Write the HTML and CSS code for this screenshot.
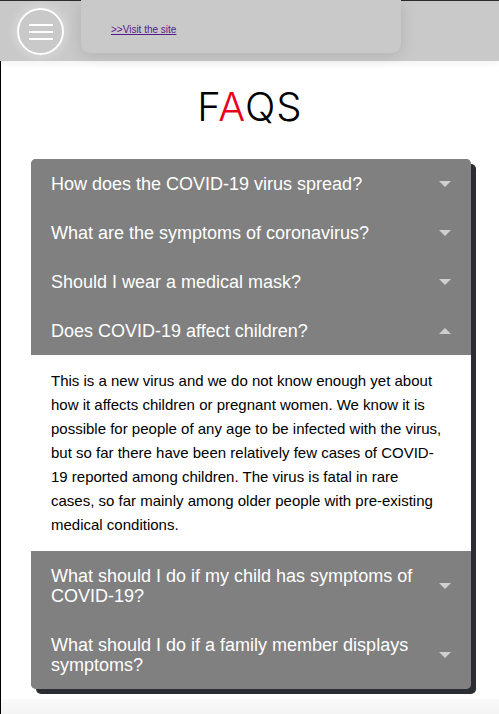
FILE: index.html
```html
<!DOCTYPE html>
<html lang="en">
<head>
<meta charset="utf-8">
<title>FAQS</title>
<link rel="stylesheet" href="styles.css">
</head>
<body>
<header class="topbar">
  <button class="menu-btn" aria-label="Menu">
    <span class="bar"></span><span class="bar"></span><span class="bar"></span>
  </button>
  <div class="card">
    <a class="visit" href="#">&gt;&gt;Visit the site</a>
  </div>
</header>
<main class="page">
  <h1 class="title">F<span class="red">A</span>QS</h1>
  <div class="accordion">
    <div class="item">
      <div class="q"><span class="q-text">How does the COVID-19 virus spread?</span><span class="arrow down"></span></div>
    </div>
    <div class="item">
      <div class="q"><span class="q-text">What are the symptoms of coronavirus?</span><span class="arrow down"></span></div>
    </div>
    <div class="item">
      <div class="q"><span class="q-text">Should I wear a medical mask?</span><span class="arrow down"></span></div>
    </div>
    <div class="item open">
      <div class="q"><span class="q-text">Does COVID-19 affect children?</span><span class="arrow up"></span></div>
      <div class="a">This is a new virus and we do not know enough yet about how it affects children or pregnant women. We know it is possible for people of any age to be infected with the virus, but so far there have been relatively few cases of COVID-19 reported among children. The virus is fatal in rare cases, so far mainly among older people with pre-existing medical conditions.</div>
    </div>
    <div class="item">
      <div class="q"><span class="q-text">What should I do if my child has symptoms of COVID-19?</span><span class="arrow down"></span></div>
    </div>
    <div class="item">
      <div class="q"><span class="q-text">What should I do if a family member displays symptoms?</span><span class="arrow down"></span></div>
    </div>
  </div>
  <div class="foot"></div>
</main>
</body>
</html>
```
FILE: styles.css
```css
* { box-sizing: border-box; }
html, body { margin: 0; padding: 0; }
body {
  font-family: "Liberation Sans", Arial, sans-serif;
  background: #fff;
  color: #000;
  height: 714px;
  overflow: hidden;
}
.topbar {
  position: relative;
  z-index: 2;
  height: 61px;
  background: #c9c9c9;
  border-top: 1px solid #2b2b2b;
  display: flex;
  align-items: flex-start;
  box-shadow: 0 2px 8px rgba(0,0,0,0.06);
}
.menu-btn {
  margin: 7px 0 0 17px;
  width: 47px;
  height: 47px;
  border-radius: 50%;
  border: 2px solid #fff;
  background: transparent;
  padding: 0;
  display: flex;
  flex-direction: column;
  align-items: center;
  justify-content: center;
  gap: 5px;
  box-shadow: 0 0 6px 5px rgba(255,255,255,0.18);
  flex: none;
}
.bar {
  display: block;
  width: 24px;
  height: 2px;
  background: #fff;
}
.card {
  margin-left: 17px;
  margin-top: -1px;
  width: 320px;
  height: 53px;
  background: #c9c9c9;
  border-radius: 0 0 9px 9px;
  box-shadow: 0 2px 16px rgba(0,0,0,0.12);
  padding: 19px 0 0 30px;
}
.visit {
  font-size: 10px;
  color: #551a8b;
  text-decoration: underline;
}
.page {
  border-left: 1px solid #000;
  height: 653px;
  display: flex;
  flex-direction: column;
  align-items: center;
}
.title {
  margin: 22px 0 0;
  font-family: Inter, "Liberation Sans", sans-serif;
  font-weight: 300;
  font-size: 40px;
  line-height: 48px;
  letter-spacing: 1px;
  color: #000;
}
.red { color: #e8001c; }
.accordion {
  margin-top: 28px;
  margin-left: 2px;
  width: 440px;
  border-radius: 5px;
  box-shadow: 5px 5px 0 #2a2d31;
  background: #808080;
}
.item:first-child .q { border-radius: 5px 5px 0 0; }
.item:last-child .q { border-radius: 0 0 5px 5px; }
.q {
  background: #808080;
  color: #fff;
  font-size: 18px;
  line-height: 20px;
  padding: 14.5px 20px;
  display: flex;
  align-items: center;
  gap: 24px;
}
.q-text { flex: 1; }
.arrow {
  width: 0;
  height: 0;
  border-left: 6px solid transparent;
  border-right: 6px solid transparent;
  flex: none;
}
.arrow.down { border-top: 6px solid #cfcfcf; }
.arrow.up { border-bottom: 6px solid #cfcfcf; }
.a {
  background: #fff;
  color: #000;
  font-size: 15px;
  line-height: 24px;
  padding: 14px 27px 14px 20px;
}
.foot {
  margin-top: auto;
  width: 100%;
  height: 15px;
  background: linear-gradient(#fafafa, #f4f4f4);
}
```
